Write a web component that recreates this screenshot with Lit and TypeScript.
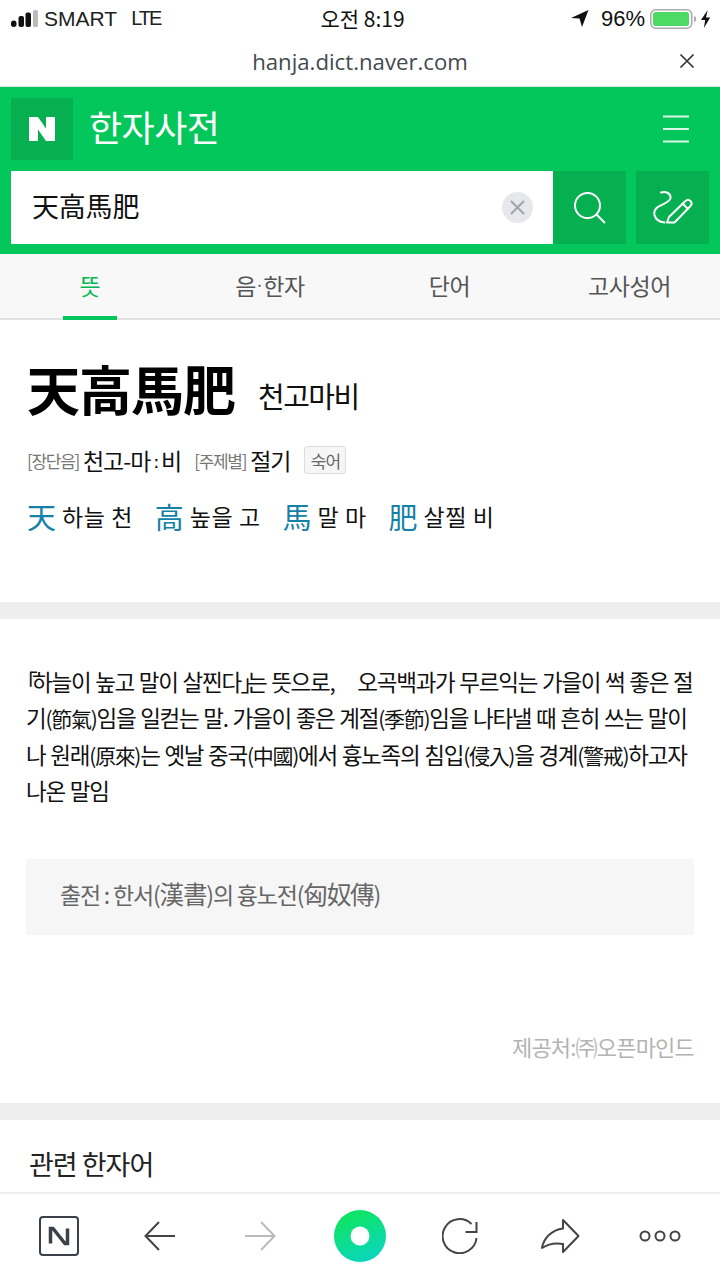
import { LitElement, html, css } from "lit";
import { customElement } from "lit/decorators.js";

@customElement("app-root")
export class AppRoot extends LitElement {
  static styles = css`
    :host { display: flex; flex-direction: column; width: 720px; height: 1280px; overflow: hidden; background: #fff; color: #000; font-family: "Noto Sans CJK KR", "Noto Sans CJK JP", sans-serif; }
    * { box-sizing: border-box; }
    svg { display: block; flex: none; }
    .status { height: 40px; flex: none; position: relative; display: flex; align-items: center; padding: 0 9px 3px 11px; font-family: "Liberation Sans", sans-serif; font-size: 21px; color: #111; }
    .carrier { display: flex; align-items: center; gap: 6px; color: #222; }
    .carrier span.lte { margin-left: 8px; letter-spacing: -2px; font-size: 20px; }
    .clock { position: absolute; left: 0; right: 0; top: 4px; text-align: center; font-size: 21px; font-family: "Noto Sans CJK KR", sans-serif; line-height: 28px; padding-left: 5px; }
    .right { margin-left: auto; display: flex; align-items: center; }
    .pct { margin-left: 12px; margin-right: 5px; font-size: 22px; }
    .bolt { margin-left: 3px; }
    .url { height: 47px; flex: none; position: relative; display: flex; align-items: center; justify-content: center; font-family: "Open Sans", sans-serif; font-size: 22.2px; color: #444a50; border-bottom: 1px solid #dfe5e1; padding-bottom: 4px; }
    .url svg { position: absolute; right: 25px; top: 13px; }
    .green { height: 167px; flex: none; background: #03c75a; padding: 11px 0 0 11px; }
    .brand { display: flex; align-items: center; height: 62px; position: relative; }
    .n { width: 62px; height: 62px; background: #06b050; display: flex; align-items: center; justify-content: center; }
    .brand h1 { margin: 0 0 6px 16px; font-weight: 400; color: #fff; font-size: 36px; line-height: 46px; letter-spacing: -0.5px; }
    .menu { position: absolute; left: 651px; top: 17px; }
    .search { display: flex; margin-top: 11px; height: 73px; }
    .box { width: 542px; background: #fff; display: flex; align-items: center; padding: 0 20px 0 21px; justify-content: space-between; font-size: 27px; color: #111; line-height: 1; letter-spacing: -0.2px; }
    .box span { margin-bottom: 4px; }
    .clear { width: 31px; height: 31px; border-radius: 50%; background: #e6e8ec; display: flex; align-items: center; justify-content: center; }
    .sbtn { width: 73px; height: 73px; background: #06b050; display: flex; align-items: center; justify-content: center; }
    .sbtn.b { margin-left: 10px; }
    .tabs { height: 66px; flex: none; display: grid; grid-template-columns: 180px 180px 179px 181px; background: #f8f8f8; border-bottom: 2px solid #e2e2e2; }
    .tab { position: relative; display: flex; align-items: center; justify-content: center; font-size: 23px; letter-spacing: -0.4px; color: #555; padding-bottom: 3px; }
    .tab .dot { font-size: 12px; letter-spacing: 0; font-weight: 700; }
    .tab.on { color: #03b74e; }
    .tab.on::after { content: ""; position: absolute; left: 63px; width: 54px; bottom: -2px; height: 4px; background: #03c75a; }
    .content { flex: 1; min-height: 0; overflow: hidden; }
    .head { height: 282px; padding: 33px 0 0 27px; }
    .title { display: flex; align-items: center; height: 70px; }
    .title b { font-size: 53px; font-weight: 700; letter-spacing: -1px; line-height: 70px; color: #000; }
    .title span { font-size: 29px; margin-left: 23px; letter-spacing: -1.5px; color: #111; margin-top: 14px; }
    .meta { display: flex; align-items: center; height: 34px; margin-top: 20px; font-size: 23px; letter-spacing: -1px; color: #111; }
    .meta small { font-size: 17px; color: #777; letter-spacing: -1.3px; margin-right: 4px; }
    .meta .gap { margin-left: 13px; }
    .meta .long { font-size: 17px; margin: 0 3px; font-weight: 700; }
    .tag { margin-left: 14px; width: 42px; height: 28px; border: 1px solid #ddd; border-radius: 3px; background: #f6f6f6; font-size: 17px; color: #666; display: flex; align-items: center; justify-content: center; letter-spacing: -1px; }
    .chars { display: flex; margin-top: 17px; height: 44px; align-items: center; }
    .ch { display: flex; align-items: center; font-size: 23px; letter-spacing: 0.6px; color: #111; margin-right: 21.7px; }
    .ch i { font-style: normal; font-size: 29px; color: #1482a8; margin-right: 6px; letter-spacing: 0; }
    .sep { height: 17px; background: #eeeeee; }
    .body { height: 484px; padding: 44px 26px 0 26px; }
    .para div { height: 36.3px; font-size: 22.5px; line-height: 36.3px; letter-spacing: -1.25px; word-spacing: 1px; white-space: nowrap; color: #111; }
    .para .h { font-size: 21px; letter-spacing: -1.3px; line-height: 1; }
    .para .br { font-feature-settings: "palt"; letter-spacing: -5.25px; line-height: 1; }
    .para .wide { margin-left: 18px; }
    .source { margin-top: 51px; height: 76px; background: #f6f6f6; display: flex; align-items: center; padding: 0 0 7px 34px; font-size: 23px; letter-spacing: -1.2px; color: #666; white-space: pre; }
    .source i { font-style: normal; font-size: 24.5px; letter-spacing: -1.1px; }
    .provider { margin-top: 96px; text-align: right; font-size: 22px; letter-spacing: -0.8px; color: #b3b3b3; line-height: 30px; }
    .rel { padding: 24px 0 0 29px; font-size: 27px; letter-spacing: -1px; color: #222; line-height: 40px; }
    .nav { height: 88px; flex: none; background: #fff; border-top: 2px solid #eeeef2; display: grid; grid-template-columns: repeat(7, 100px); align-items: center; padding: 0 0 2px 10px; }
    .nav > div { display: flex; justify-content: center; }
    .nav > .home { padding-right: 2px; }
  `;

  render() {
    return html`
      <div class="status">
        <div class="carrier">
          <svg width="27" height="17" viewBox="0 0 27 17">
            <rect x="0" y="10.500" width="5.500" height="6.500" rx="2.700" fill="#111"/>
            <rect x="7.500" y="6" width="5.500" height="11" rx="2" fill="#111"/>
            <rect x="14.500" y="2.500" width="5.500" height="14.500" rx="2" fill="#111"/>
            <rect x="22" y="0" width="5" height="17" rx="1.500" fill="#bbb"/>
          </svg>
          <span>SMART</span><span class="lte">LTE</span>
        </div>
        <div class="clock">오전 8:19</div>
        <div class="right">
          <svg width="18" height="17" viewBox="0 0 18 17"><path d="M17.500 0 L0 8 L8.500 8.500 L11 17 Z" fill="#111"/></svg>
          <span class="pct">96%</span>
          <svg width="48" height="20" viewBox="0 0 48 20">
            <rect x="0.800" y="0.800" width="41" height="18.400" rx="5" fill="none" stroke="#aaa" stroke-width="1.500"/>
            <rect x="3" y="3" width="36" height="14" rx="2.500" fill="#4cd964"/>
            <path d="M44 7v6c1.500-.4 2.200-1.500 2.200-3s-.7-2.600-2.200-3z" fill="#aaa"/>
          </svg>
          <svg class="bolt" width="10" height="18" viewBox="0 0 12 18" preserveAspectRatio="none"><path d="M8 0 L0 10 L5 10 L3.500 18 L11 7.500 L6 7.500 Z" fill="#111"/></svg>
        </div>
      </div>

      <div class="url">hanja.dict.naver.com
        <svg width="16" height="16" viewBox="0 0 16 16"><path d="M1.500 1.500l13 13M14.500 1.500l-13 13" stroke="#333" stroke-width="1.700" fill="none"/></svg>
      </div>

      <div class="green">
        <div class="brand">
          <div class="n"><svg width="26" height="24" viewBox="0 0 26 24"><path d="M0 0H9L17 11.500V0H26V24H17L9 12.500V24H0Z" fill="#fff"/></svg></div>
          <h1>한자사전</h1>
          <svg class="menu" width="28" height="28" viewBox="0 0 28 28"><path d="M1 1.500h26M1 14h26M1 26.500h26" stroke="#fff" stroke-opacity=".85" stroke-width="2" fill="none"/></svg>
        </div>
        <div class="search">
          <div class="box"><span>天高馬肥</span>
            <div class="clear"><svg width="15" height="15" viewBox="0 0 15 15"><path d="M1 1l13 13M14 1L1 14" stroke="#a2a5ab" stroke-width="2" fill="none"/></svg></div>
          </div>
          <div class="sbtn"><svg width="34" height="34" viewBox="0 0 34 34"><circle cx="14.500" cy="14.500" r="12.500" fill="none" stroke="#fff" stroke-width="2"/><path d="M23.500 23.500L32 32" stroke="#fff" stroke-width="2" fill="none"/></svg></div>
          <div class="sbtn b"><svg width="40" height="34" viewBox="0 0 40 34" fill="none" stroke="#fff" stroke-width="2" stroke-linecap="round" stroke-linejoin="round">
            <path d="M8 1.500c5-1.500 10 1 9.500 5.500-.4 3.500-5 5-10 7.500C3 16.500.5 19.500 1.500 24c1 4 4.500 7 10 7.500"/>
            <path d="M14 31.500h7.500L37.500 15c1.500-1.500 1.500-3.500 0-5s-3.500-1.500-5 0L16 26z"/>
            <path d="M29.500 12.500l5.500 5.500"/>
          </svg></div>
        </div>
      </div>

      <div class="tabs">
        <div class="tab on">뜻</div><div class="tab">음<span class="dot">·</span>한자</div><div class="tab">단어</div><div class="tab">고사성어</div>
      </div>

      <div class="content">
        <div class="head">
          <div class="title"><b>天高馬肥</b><span>천고마비</span></div>
          <div class="meta">
            <small>[장단음]</small>천고-마<span class="long">ː</span>비
            <small class="gap">[주제별]</small>절기
            <div class="tag">숙어</div>
          </div>
          <div class="chars">
            <div class="ch"><i>天</i>하늘 천</div>
            <div class="ch"><i>高</i>높을 고</div>
            <div class="ch"><i>馬</i>말 마</div>
            <div class="ch"><i>肥</i>살찔 비</div>
          </div>
        </div>
        <div class="sep"></div>
        <div class="body">
          <div class="para">
            <div><span class="br">「</span>하늘이 높고 말이 살찐다<span class="br">」</span>는 뜻으로, <span class="wide">오곡백과가 무르익는 가을이 썩 좋은 절</span></div>
            <div>기<span class="h">(節氣)</span>임을 일컫는 말. 가을이 좋은 계절<span class="h">(季節)</span>임을 나타낼 때 흔히 쓰는 말이</div>
            <div>나 원래<span class="h">(原來)</span>는 옛날 중국<span class="h">(中國)</span>에서 흉노족의 침입<span class="h">(侵入)</span>을 경계<span class="h">(警戒)</span>하고자</div>
            <div>나온 말임</div>
          </div>
          <div class="source">출전 : 한서(<i>漢書</i>)의 흉노전(<i>匈奴傳</i>)</div>
          <div class="provider">제공처:㈜오픈마인드</div>
        </div>
        <div class="sep"></div>
        <div class="rel">관련 한자어</div>
      </div>

      <div class="nav">
        <div class="home"><svg width="40" height="40" viewBox="0 0 40 40"><rect x="1" y="1" width="38" height="38" rx="3" fill="none" stroke="#3c4048" stroke-width="2"/><path d="M11.500 27.500V12.500H14L26 27.500H28.500V12.500" fill="none" stroke="#3c4048" stroke-width="3.500"/></svg></div>
        <div><svg width="32" height="30" viewBox="0 0 32 30"><path d="M31 15H1.500M15 1L1.500 15L15 29" fill="none" stroke="#444" stroke-width="2"/></svg></div>
        <div><svg width="32" height="30" viewBox="0 0 32 30"><path d="M1 15H30.500M17 1L30.500 15L17 29" fill="none" stroke="#bbb" stroke-width="2"/></svg></div>
        <div>
          <svg width="52" height="52" viewBox="0 0 52 52">
            <defs><linearGradient id="g" x1="0.300" y1="0.050" x2="0.700" y2="0.950"><stop offset="0.100" stop-color="#0ee36a"/><stop offset="1" stop-color="#0ad6bd"/></linearGradient></defs>
            <circle cx="26" cy="26" r="26" fill="url(#g)"/><circle cx="26" cy="26" r="9.500" fill="#fff"/>
          </svg>
        </div>
        <div><svg width="36" height="36" viewBox="0 0 36 36"><path d="M34.500 20A17 17 0 1 1 29.500 6" fill="none" stroke="#444" stroke-width="2"/><path d="M34.500 4V14H23.500" fill="none" stroke="#444" stroke-width="2"/></svg></div>
        <div><svg width="40" height="36" viewBox="0 0 40 36"><path d="M23 2L38.500 18L23 34V26C15 24.500 8 26 2 30C3.500 20 12 12 23 10.500Z" fill="none" stroke="#444" stroke-width="2" stroke-linejoin="round"/></svg></div>
        <div><svg width="42" height="12" viewBox="0 0 42 12"><circle cx="6" cy="6" r="4.500" fill="none" stroke="#444" stroke-width="2"/><circle cx="21" cy="6" r="4.500" fill="none" stroke="#444" stroke-width="2"/><circle cx="36" cy="6" r="4.500" fill="none" stroke="#444" stroke-width="2"/></svg></div>
      </div>
    `;
  }
}
